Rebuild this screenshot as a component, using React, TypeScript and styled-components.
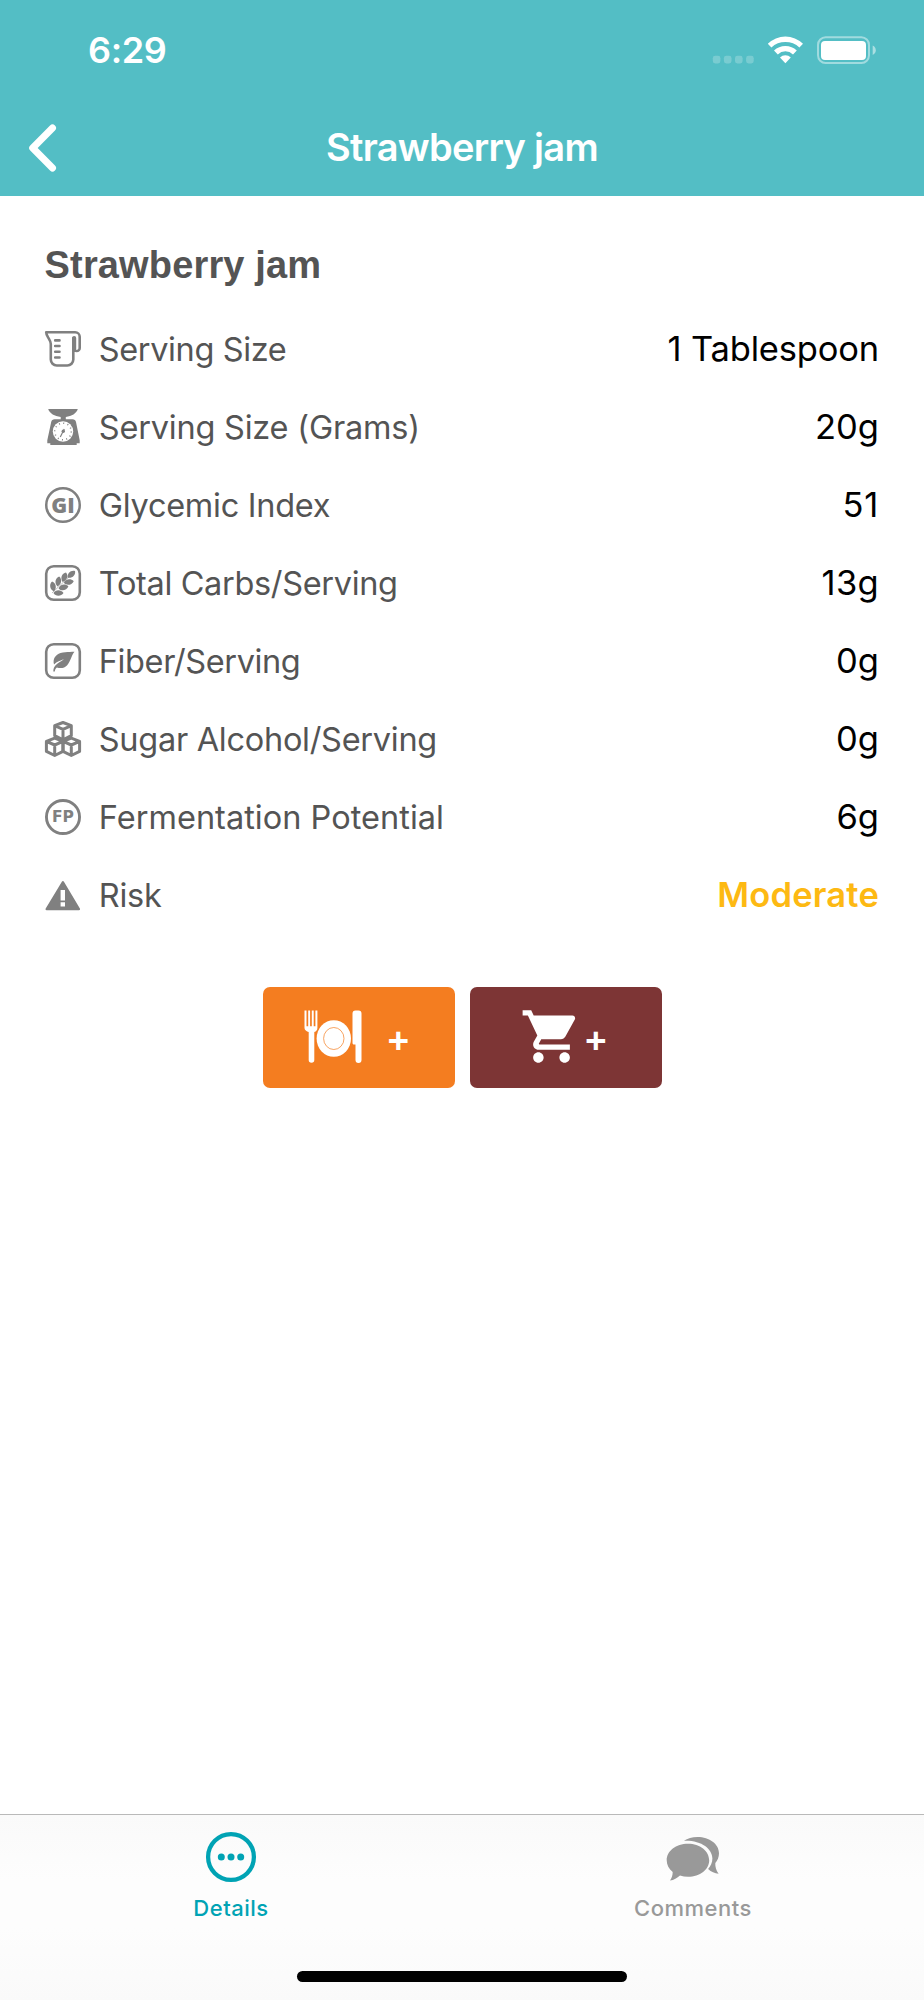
import React from "react";
import styled, { createGlobalStyle } from "styled-components";

const GlobalStyle = createGlobalStyle`
  * { box-sizing: border-box; }
  body { margin: 0; background: #fff; }
`;

const Screen = styled.div`
  width: 924px;
  height: 2000px;
  display: flex;
  flex-direction: column;
  background: #fff;
  overflow: hidden;
  font-family: Inter, "Liberation Sans", sans-serif;
`;

const Header = styled.header`
  height: 196.4px;
  flex: none;
  background: #53bec5;
  color: #fff;
`;

const StatusBar = styled.div`
  height: 98px;
  display: flex;
  align-items: center;
  justify-content: space-between;
  padding: 2px 49px 0 88px;
`;

const Clock = styled.span`
  font-size: 36px;
  font-weight: 600;
  line-height: 44px;
  letter-spacing: -0.4px;
`;

const StatusIcons = styled.div`
  display: flex;
  align-items: center;
`;

const NavBar = styled.div`
  height: 98px;
  display: grid;
  grid-template-columns: 100px 1fr 100px;
  align-items: center;
`;

const BackButton = styled.button`
  display: flex;
  width: 56px;
  padding: 1px 0 0;
  margin-left: 20px;
  border: 0;
  background: none;
  color: inherit;
`;

const NavTitle = styled.h1`
  margin: 0;
  text-align: center;
  font-size: 38px;
  line-height: 46px;
  font-weight: 600;
  letter-spacing: -0.7px;
`;

const Content = styled.main`
  flex: 1;
  padding: 46px 45px 0 44.6px;
`;

const FoodName = styled.h2`
  margin: 0 0 21.6px;
  color: #545454;
  font: 700 38px/46px "Liberation Sans", Arial, sans-serif;
  letter-spacing: 0.15px;
`;

const FactRow = styled.div`
  height: 78px;
  display: flex;
  align-items: center;
`;

const FactIcon = styled.svg`
  width: 36px;
  height: 36px;
  flex: none;
  margin-right: 18.2px;
  color: #808080;
  overflow: visible;
`;

const FactLabel = styled.span<{ $spacing: number }>`
  flex: 1;
  padding-top: 2px;
  color: #545454;
  font-size: 32.5px;
  line-height: 40px;
  letter-spacing: ${(p) => p.$spacing}px;
`;

const FactValue = styled.span<{ $risk?: boolean; $spacing?: number }>`
  color: ${(p) => (p.$risk ? "#fdb913" : "#000")};
  font-size: 34.5px;
  line-height: 40px;
  font-weight: ${(p) => (p.$risk ? 600 : 400)};
  letter-spacing: ${(p) => p.$spacing ?? 0}px;
`;

const Actions = styled.div`
  display: flex;
  justify-content: center;
  gap: 15.4px;
  margin: 53px 0 0 1px;
`;

const ActionButton = styled.button<{ $color: string; $inset: number }>`
  width: 192px;
  height: 101px;
  display: flex;
  align-items: flex-start;
  padding: 18.5px 0 0 ${(p) => p.$inset}px;
  border: 0;
  border-radius: 7px;
  background: ${(p) => p.$color};
  color: #fff;
`;

const Plus = styled.span<{ $gap: number }>`
  margin: 13.5px 0 0 ${(p) => p.$gap}px;
  font: 700 38px/40px "Open Sans", sans-serif;
`;

const TabBar = styled.footer`
  height: 186px;
  flex: none;
  display: flex;
  flex-direction: column;
  justify-content: space-between;
  align-items: center;
  border-top: 1px solid #b9b9b9;
  background: linear-gradient(#fafafa, #fdfdfd 35%, #fdfdfd 60%, #fafafa);
`;

const Tabs = styled.nav`
  width: 100%;
  display: flex;
`;

const Tab = styled.a<{ $active?: boolean }>`
  flex: 1;
  display: flex;
  flex-direction: column;
  align-items: center;
  padding-top: 12px;
  color: ${(p) => (p.$active ? "#00a3b4" : "#999999")};
`;

const TabLabel = styled.span`
  margin-top: 6.5px;
  font-size: 22px;
  line-height: 28px;
  font-weight: 500;
  letter-spacing: 0.5px;
`;

const HomeIndicator = styled.div`
  width: 330px;
  height: 11px;
  margin-bottom: 18px;
  border-radius: 6px;
  background: #000;
`;

const Signal = () => (
  <svg width="163" height="28" viewBox="712 36 163 28" overflow="visible" fill="#fff">
    <g opacity="0.22">
      {[712.8, 723.9, 735, 746.1].map((x) => (
        <rect key={x} x={x} y="55.8" width="7.6" height="7.6" rx="2.4" />
      ))}
    </g>
    <path d="M767.8 43.7a25.2 25.2 0 0 1 35.2 0l-3.6 3.9a20 20 0 0 0-28 0z" />
    <path d="M774 50.5a16.4 16.4 0 0 1 22.8 0l-3.8 3.9a11 11 0 0 0-15.2 0z" />
    <path d="M780 57.4a7.7 7.7 0 0 1 10.8 0l-5.4 5.8z" />
    <rect x="818" y="37.3" width="51" height="25.6" rx="7.6" fill="none" stroke="#fff" strokeWidth="2" opacity="0.45" />
    <rect x="821" y="41" width="45" height="19" rx="4" />
    <path d="M872.7 45.5v9.4c2-.9 3.1-2.7 3.1-4.7s-1.1-3.8-3.1-4.7z" opacity="0.5" />
  </svg>
);

const Cup = () => (
  <g fill="none" stroke="currentColor" strokeWidth="2.6" strokeLinejoin="round" strokeLinecap="round">
    <path d="M28.3 7v21.5a6 6 0 0 1-6 6h-10.500a6 6 0 0 1-6-6V13c0-2-.8-3.500-2-5.400C2.500 5.500 1.200 4 1.200 1.300h29a4.500 4.500 0 0 1 4.500 4.500v11.200a3 3 0 0 1-3 3c-1.600 0-2.700-.8-2.700-2.500z" />
    <path d="M29.200 7v11" strokeWidth="4" />
    <path d="M10.200 9.400h4.300M10.200 15h4.300M10.200 20.800h4.300M10.200 26.500h4.300" />
  </g>
);

const Scale = () => (
  <>
    <path
      fill="currentColor"
      d="M3.200 0h29.600c-1.500 4.600-6 7.300-12 7.900v2.400h6.700c2 0 3 .8 3.500 2.600l3.700 18.400v3h-3V35.900H5.300v-1.600h-3v-3L6.200 12.900c.4-1.800 1.500-2.600 3.500-2.600h6V7.900C9.600 7.300 4.700 4.600 3.200 0z"
    />
    <circle cx="18" cy="22.500" r="10.200" fill="#fff" />
    <circle cx="18" cy="22.500" r="8.300" fill="none" stroke="currentColor" strokeWidth="1.500" strokeDasharray="1 3.346" />
    <circle cx="18.300" cy="22.200" r="1.700" fill="currentColor" />
    <path d="M19.300 20l-4 8" stroke="currentColor" strokeWidth="1.200" />
  </>
);

const Badge = ({ text, size, family, stroke, y }: { text: string; size: number; family: string; stroke: number; y: number }) => (
  <>
    <circle cx="18" cy="18" r={18 - stroke / 2} fill="none" stroke="currentColor" strokeWidth={stroke} />
    <text x="18" y={y} textAnchor="middle" fill="currentColor" fontFamily={family} fontSize={size} fontWeight="800">
      {text}
    </text>
  </>
);

const Frame = () => (
  <rect x="1.200" y="1.200" width="33.600" height="33.600" rx="7.500" fill="none" stroke="currentColor" strokeWidth="2.600" />
);

const grains: [number, number, number][] = [
  [8, 21.500, 80],
  [13.300, 16.500, 100],
  [19.300, 12.300, 110],
  [26.300, 9.300, 138],
  [13.500, 28, 0],
  [18.500, 22.400, -12],
  [23.800, 17, -10],
];

const Wheat = () => (
  <>
    <Frame />
    <path d="M7 28L26 10" stroke="currentColor" strokeWidth="0.5" />
    {grains.map(([x, y, a]) => (
      <path
        key={`${x}`}
        d="M-5 0C-3-3.700 2.600-3.700 5 0C2.600 3.700-3 3.700-5 0Z"
        transform={`translate(${x} ${y}) rotate(${a})`}
        fill="currentColor"
      />
    ))}
  </>
);

const Leaf = () => (
  <>
    <Frame />
    <path
      fill="currentColor"
      d="M29.500 8.800c-3.500 4-3.500 9.200-7.300 13.400-2.700 3-6.700 3.600-10.300 2.200-1.200.8-1.900 2-2.100 4H8.300c0-2.800.9-4.700 2.300-6.200 2.500-2.700 5.700-3.500 8.400-6.200-3.700 1.800-7 2.500-10 5.400-1.500-5.500 1.500-9.700 6.500-11.400 5-1.600 9-.8 14-1.200z"
    />
  </>
);

const Cubes = () => (
  <g fill="none" stroke="currentColor" strokeWidth="3" strokeLinejoin="round">
    {[
      [18, 1.500],
      [9.700, 17.200],
      [26.300, 17.200],
    ].map(([x, y]) => (
      <path key={x} transform={`translate(${x} ${y})`} d="M0 0l8.300 3.200v10L0 17.300l-8.300-4.100v-10zM-8.300 3.200L0 6.800l8.300-3.600M0 6.800v10.500" />
    ))}
  </g>
);

const Warning = () => (
  <path
    fill="currentColor"
    fillRule="evenodd"
    d="M17 4.400c.4-.7 1.400-.7 1.800 0l16.100 27.200c.5.8 0 1.700-.9 1.700H1.600c-.9 0-1.400-.9-.9-1.700zM15.600 13.100v10.300h4.400V13.100zm0 12.200v4.100h4.400v-4.100z"
  />
);

const facts = [
  { icon: <Cup />, label: "Serving Size", value: "1 Tablespoon", spacing: -0.38, valueSpacing: -0.18 },
  { icon: <Scale />, label: "Serving Size (Grams)", value: "20g", spacing: -0.21 },
  { icon: <Badge text="GI" size={21.500} family="Open Sans" stroke={2.500} y={25.800} />, label: "Glycemic Index", value: "51", spacing: -0.27, valueSpacing: 0.8 },
  { icon: <Wheat />, label: "Total Carbs/Serving", value: "13g", spacing: -0.34, valueSpacing: 0.3 },
  { icon: <Leaf />, label: "Fiber/Serving", value: "0g", spacing: -0.38 },
  { icon: <Cubes />, label: "Sugar Alcohol/Serving", value: "0g", spacing: -0.28 },
  { icon: <Badge text="FP" size={15.500} family="DejaVu Sans" stroke={2.900} y={23.300} />, label: "Fermentation Potential", value: "6g", spacing: 0.02 },
  { icon: <Warning />, label: "Risk", value: "Moderate", risk: true, spacing: -0.25, valueSpacing: 0.2 },
];

export default function App() {
  return (
    <>
      <GlobalStyle />
      <Screen>
        <Header>
          <StatusBar>
            <Clock>6:29</Clock>
            <StatusIcons>
              <Signal />
            </StatusIcons>
          </StatusBar>
          <NavBar>
            <BackButton aria-label="Back">
              <svg width="40" height="50" viewBox="20 122.700 40 50" fill="none" stroke="#fff" strokeWidth="7" strokeLinecap="round" strokeLinejoin="round">
                <path d="M52.500 127.700L32.700 147.700L52.500 167.700" />
              </svg>
            </BackButton>
            <NavTitle>Strawberry jam</NavTitle>
          </NavBar>
        </Header>
        <Content>
          <FoodName>Strawberry jam</FoodName>
          {facts.map((f) => (
            <FactRow key={f.label}>
              <FactIcon viewBox="0 0 36 36">{f.icon}</FactIcon>
              <FactLabel $spacing={f.spacing}>{f.label}</FactLabel>
              <FactValue $risk={f.risk} $spacing={f.valueSpacing}>
                {f.value}
              </FactValue>
            </FactRow>
          ))}
          <Actions>
            <ActionButton $color="#f47d20" $inset={41} aria-label="Add to meal">
              <svg width="58" height="63" viewBox="303.500 1005.500 58 63" fill="#fff">
                <path d="M304 1011h2v15.700h1.700V1011h1.900v15.700h1.700V1011h1.900v15.700h1.700V1011h2v17.500c0 2-1.200 3.500-3.100 4v28a2.700 2.700 0 0 1-5.600 0v-28c-2-.5-4.200-2-4.200-4z" />
                <ellipse cx="333.300" cy="1039" rx="17.200" ry="18.300" />
                <ellipse cx="333.300" cy="1039" rx="10.200" ry="11" fill="none" stroke="#f47d20" strokeWidth="0.700" />
                <path d="M352 1014a3 3 0 0 1 3-3h3a3 3 0 0 1 3 3v46.500a3 3 0 0 1-6 0V1045h-1.500c-.9 0-1.500-.7-1.500-1.500z" />
              </svg>
              <Plus $gap={26}>+</Plus>
            </ActionButton>
            <ActionButton $color="#7d3535" $inset={50.500} aria-label="Add to shopping list">
              <svg width="63" height="63" viewBox="0 0 24 24" fill="#fff">
                <path d="M7 18c-1.100 0-1.990.9-1.990 2S5.900 22 7 22s2-.9 2-2-.9-2-2-2zM1 2v2h2l3.600 7.590-1.350 2.450c-.16.28-.25.61-.25.96 0 1.100.9 2 2 2h12v-2H7.420c-.14 0-.25-.11-.25-.25l.03-.12.9-1.630h7.450c.75 0 1.410-.41 1.750-1.030l3.580-6.490c.08-.14.12-.31.12-.48 0-.55-.45-1-1-1H5.210l-.94-2H1zm16 16c-1.100 0-1.990.9-1.990 2s.89 2 1.990 2 2-.9 2-2-.9-2-2-2z" />
              </svg>
              <Plus $gap={1.500}>+</Plus>
            </ActionButton>
          </Actions>
        </Content>
        <TabBar>
          <Tabs>
            <Tab $active>
              <svg width="60" height="60" viewBox="0 0 60 60" fill="currentColor">
                <circle cx="30" cy="30" r="22.900" fill="none" stroke="currentColor" strokeWidth="4.300" />
                <circle cx="20.300" cy="30" r="3.500" />
                <circle cx="30" cy="30" r="3.500" />
                <circle cx="39.700" cy="30" r="3.500" />
              </svg>
              <TabLabel>Details</TabLabel>
            </Tab>
            <Tab>
              <svg width="60" height="60" viewBox="663 1827 60 60" fill="currentColor">
                <path d="M688 1843.700c12 0 21.200 7.300 21.200 16.500s-9.200 16.500-21.200 16.500c-2.800 0-5.500-.4-8-1.200-3 2.700-6 4.600-10 5 1.800-2.500 2.700-5.200 2.700-8.500-3.800-3-6-7.200-6-11.800 0-9.200 9.300-16.500 21.300-16.500z" />
                <path d="M684 1840.700c3.500-2.300 8-3.700 13.500-3.700 12 0 21.500 7 21.500 16.300 0 4-1.500 7.200-3.700 9.700-.2 3.600.8 7.400 3.300 10.800-4-.3-7.300-1.700-10.500-4.700 2.500-3 4.300-6.500 4.300-10.600 0-10-11.400-18.500-28.400-17.800z" />
              </svg>
              <TabLabel>Comments</TabLabel>
            </Tab>
          </Tabs>
          <HomeIndicator />
        </TabBar>
      </Screen>
    </>
  );
}
